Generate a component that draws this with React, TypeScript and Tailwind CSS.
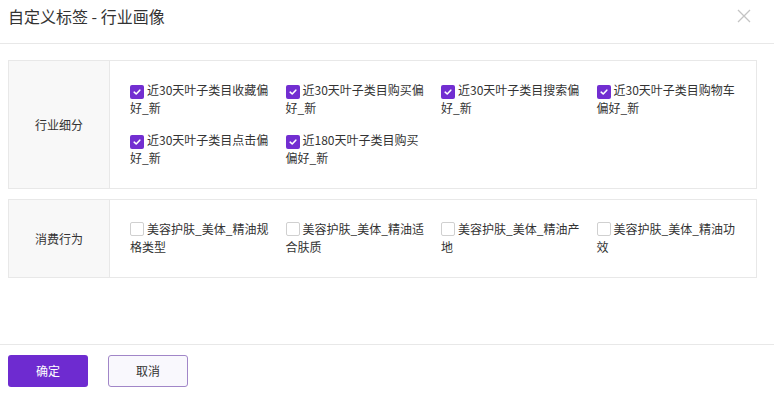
import React from "react";

interface TagItem {
  readonly lines: [string, string];
  readonly checked: boolean;
}

interface TagSection {
  readonly label: string;
  readonly items: TagItem[];
}

const sections: TagSection[] = [
  {
    label: "行业细分",
    items: [
      { lines: ["近30天叶子类目收藏偏", "好_新"], checked: true },
      { lines: ["近30天叶子类目购买偏", "好_新"], checked: true },
      { lines: ["近30天叶子类目搜索偏", "好_新"], checked: true },
      { lines: ["近30天叶子类目购物车", "偏好_新"], checked: true },
      { lines: ["近30天叶子类目点击偏", "好_新"], checked: true },
      { lines: ["近180天叶子类目购买", "偏好_新"], checked: true },
    ],
  },
  {
    label: "消费行为",
    items: [
      { lines: ["美容护肤_美体_精油规", "格类型"], checked: false },
      { lines: ["美容护肤_美体_精油适", "合肤质"], checked: false },
      { lines: ["美容护肤_美体_精油产", "地"], checked: false },
      { lines: ["美容护肤_美体_精油功", "效"], checked: false },
    ],
  },
];

const CheckBox = ({ checked }: { checked: boolean }) =>
  checked ? (
    <span className="inline-flex items-center justify-center w-[14px] h-[14px] mr-[3px] rounded-[2px] bg-[#722ed1] align-[-2px]">
      <svg width="10" height="10" viewBox="0 0 10 10" fill="none">
        <path
          d="M2.2 5.2 L4.2 7 L7.8 3.2"
          stroke="#fff"
          strokeWidth="1.6"
          strokeLinecap="round"
          strokeLinejoin="round"
        />
      </svg>
    </span>
  ) : (
    <span className="inline-block w-[14px] h-[14px] mr-[3px] rounded-[2px] border border-[#d0d0d0] bg-white align-[-2px]" />
  );

const Section = ({ section }: { section: TagSection }) => (
  <div className="flex border border-[#e8e8e8]">
    <div className="w-[101px] shrink-0 bg-[#f8f8f8] border-r border-[#e8e8e8] flex items-center justify-center text-[12px] text-[#333]">
      {section.label}
    </div>
    <div className="flex-1 pl-[20px] pt-[20px] pb-[21px] grid grid-cols-[repeat(4,155.5px)] gap-y-[14px]">
      {section.items.map((item, i) => (
        <label
          key={i}
          className="block text-[12px] leading-[18px] text-[#333] cursor-pointer"
        >
          <span className="whitespace-nowrap">
            <CheckBox checked={item.checked} />
            {item.lines[0]}
          </span>
          <br />
          <span className="whitespace-nowrap">{item.lines[1]}</span>
        </label>
      ))}
    </div>
  </div>
);

const App = () => {
  return (
    <div
      className="w-[774px] h-[396px] bg-white flex flex-col overflow-hidden"
      style={{ fontFamily: '"Noto Sans CJK SC", "Noto Sans", sans-serif' }}
    >
      <div className="h-[44px] shrink-0 border-b border-[#e8e8e8] px-[8px] pt-[4px] flex items-start justify-between">
        <span className="text-[16px] leading-[24px] text-[#333]">
          自定义标签 - 行业画像
        </span>
        <svg
          width="14"
          height="14"
          viewBox="0 0 14 14"
          className="mt-[5px] mr-[15px]"
        >
          <path
            d="M1 1 L13 13 M13 1 L1 13"
            stroke="#c4c4c4"
            strokeWidth="1.3"
          />
        </svg>
      </div>

      <div className="flex-1 pt-[16px] pl-[8px] pr-[17px] flex flex-col gap-[10px]">
        {sections.map((s, i) => (
          <Section key={i} section={s} />
        ))}
      </div>

      <div className="shrink-0 border-t border-[#e8e8e8] px-[8px] pt-[10px] pb-[9px] flex gap-[20px]">
        <button className="w-[80px] h-[32px] rounded-[3px] bg-[#6e2bd0] text-white text-[12px]">
          确定
        </button>
        <button className="w-[80px] h-[32px] rounded-[3px] bg-[#f9f8fd] border border-[#a186c8] text-[#333] text-[12px]">
          取消
        </button>
      </div>
    </div>
  );
};

export default App;
